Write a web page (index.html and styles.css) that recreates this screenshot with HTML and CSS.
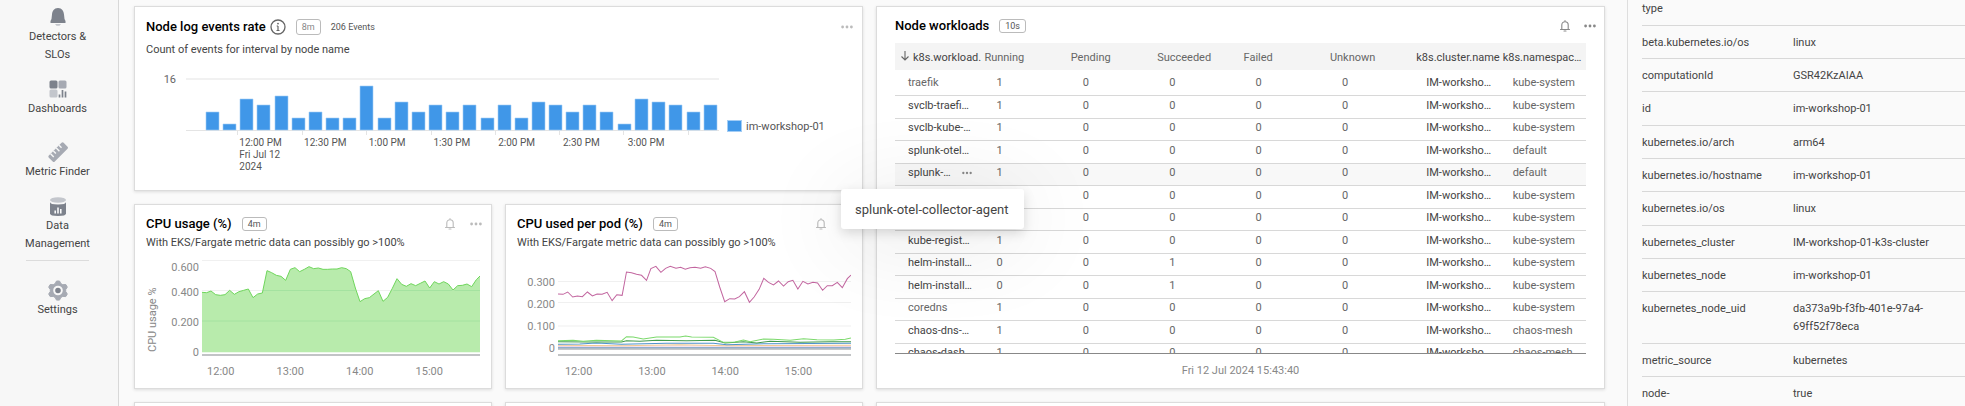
FILE: index.html
```html
<!DOCTYPE html>
<html lang="en">
<head>
<meta charset="utf-8">
<title>Kubernetes node dashboard</title>
<link rel="stylesheet" href="styles.css">
</head>
<body>
<svg class="defs" aria-hidden="true">
  <symbol id="bell" viewBox="0 0 12 12"><path d="M1.5 9.5h9M2.8 9.3V5a3.2 3.2 0 0 1 6.4 0v4.3M6 1.8V.6M5 11h2" fill="none" stroke="currentColor" stroke-width="1.1" stroke-linecap="round"/></symbol>
  <symbol id="dots" viewBox="0 0 12 4"><g fill="currentColor"><circle cx="1.6" cy="2" r="1.4"/><circle cx="6" cy="2" r="1.4"/><circle cx="10.4" cy="2" r="1.4"/></g></symbol>
</svg>

<nav class="nav">
  <a href="#detectors"><svg viewBox="0 0 20 20"><path d="M10 0C6 0 4.300 3 4 6.500L3.500 11 2.500 13v2h15v-2l-1-2-.5-4.500C15.700 3 14 0 10 0z" fill="#7d828c"/><path d="M7 16h6l-1.500 1.700h-3z" fill="#c3c6cc"/></svg>Detectors &amp; SLOs</a>
  <a href="#dashboards"><svg viewBox="0 0 20 20"><rect x="1.500" y="0.500" width="8" height="8" rx="1.500" fill="#7d828c"/><rect x="10.500" y="0.500" width="8" height="8" rx="1.500" fill="#a6aab3"/><rect x="1.500" y="9.500" width="8" height="8" rx="1.500" fill="#c3c6cc"/><path d="M11.500 17.500v-3M14.500 17.500v-7.500M17.500 17.500v-6" stroke="#7d828c" stroke-width="1.700"/></svg>Dashboards</a>
  <a href="#metrics" class="spaced"><svg viewBox="0 0 20 20"><g transform="rotate(-45 10 9)"><rect x="-.5" y="5" width="21" height="8.500" rx="1.500" fill="#a6aab3"/><path d="M3.500 5v4.500M7.500 5v3.500M11.500 5v4.500M15.500 5v3.500" stroke="#f7f7f7" stroke-width="1.400"/></g></svg>Metric Finder</a>
  <a href="#data"><svg viewBox="0 0 20 20"><path d="M2 3.500v13Q2 19 10 19t8-2.500v-13z" fill="#7d828c"/><path d="M2 3v2q0 2.500 8 2.500T18 5V3z" fill="#f7f7f7"/><ellipse cx="10" cy="3" rx="8" ry="2.800" fill="#c3c6cc"/><path d="M7.200 16.500v-3M10 16.500v-6M12.800 16.500v-4.500" stroke="#fff" stroke-width="1.500"/></svg>Data Management</a>
  <hr>
  <a href="#settings"><svg viewBox="0 0 20 20"><path d="M8.500 0h3l1.300 2.600 2 1.100 3-.2 1.500 2.600-1.600 2.500v1.900l1.600 2.500-1.500 2.600-3-.2-2 1.100-1.300 2.600h-3l-1.300-2.600-2-1.100-3 .2L.7 13l1.600-2.500V8.600L.7 6.100l1.500-2.600 3 .2 2-1.100z" fill="#a6aab3" stroke="#a6aab3" stroke-linejoin="round"/><circle cx="10" cy="9.500" r="3.800" fill="#7d828c" stroke="#f7f7f7" stroke-width="2"/></svg>Settings</a>
</nav>

<main class="board">
  <section class="card wide events">
    <header><h2>Node log events rate</h2>
      <svg class="info" viewBox="0 0 16 16"><circle cx="8" cy="8" r="7" fill="none" stroke="#666" stroke-width="1.300"/><path d="M8 7v4.500M6.500 11.500h3M6.700 7H8" stroke="#666" stroke-width="1.200" fill="none"/><circle cx="8" cy="4.600" r=".9" fill="#666"/></svg>
      <span class="badge">8m</span><span class="count">206 Events</span>
      <span class="tools"><button aria-label="More"><svg class="dots"><use href="#dots"/></svg></button></span></header>
    <p class="sub">Count of events for interval by node name</p>
    <div class="bars">
      <span class="max">16</span>
      <div class="plot">
        <svg viewBox="0 0 533 57" preserveAspectRatio="none">
          <path d="M0 1H533" stroke="#f1f1f1" stroke-width="2"/>
          <path d="M0 52.500H533M51.500 52v5M116.500 52v5M180.500 52v5M245.500 52v5M309.500 52v5M373.500 52v5M437.500 52v5M502.500 52v5" stroke="#e4e4e4"/>
          <path fill="#4097e8" stroke="#a3cdf5" stroke-width=".6" d="M20 52v-18h13v18zM37 52v-6h13v6zM54 52v-31h13v31zM71 52v-25h13v25zM89 52v-34h13v34zM106 52v-12h13v12zM123 52v-18h13v18zM140 52v-12h13v12zM157 52v-12h13v12zM174 52v-44h13v44zM192 52v-12h13v12zM209 52v-28h13v28zM226 52v-18h13v18zM243 52v-25h13v25zM260 52v-18h13v18zM277 52v-25h13v25zM295 52v-12h13v12zM312 52v-25h13v25zM329 52v-12h13v12zM346 52v-28h13v28zM363 52v-25h13v25zM380 52v-18h13v18zM397 52v-25h13v25zM414 52v-18h13v18zM432 52v-6h13v6zM449 52v-31h13v31zM466 52v-28h13v28zM483 52v-25h13v25zM501 52v-18h13v18zM518 52v-25h13v25z"/>
        </svg>
        <div class="times"><span>12:00 PM<br>Fri Jul 12<br>2024</span><span>12:30 PM</span><span>1:00 PM</span><span>1:30 PM</span><span>2:00 PM</span><span>2:30 PM</span><span>3:00 PM</span></div>
      </div>
      <div class="legend"><i></i>im-workshop-01</div>
    </div>
  </section>

  <section class="card wide tall workloads">
    <header><h2>Node workloads</h2><span class="badge">10s</span>
      <span class="tools"><button aria-label="Alerts"><svg class="bell"><use href="#bell"/></svg></button><button aria-label="More"><svg class="dots"><use href="#dots"/></svg></button></span></header>
    <div class="scroll">
      <table>
        <thead><tr><th class="dark"><svg class="sort" viewBox="0 0 8 10"><path d="M4 0v9M.5 5.500 4 9l3.500-3.500" fill="none" stroke="#666" stroke-width="1.100"/></svg>k8s.workload..</th><th>Running</th><th>Pending</th><th>Succeeded</th><th>Failed</th><th>Unknown</th><th class="dark">k8s.cluster.name</th><th class="dark">k8s.namespac…</th></tr></thead>
        <tbody>
          <tr><td>traefik</td><td>1</td><td>0</td><td>0</td><td>0</td><td>0</td><td class="dark">IM-worksho…</td><td>kube-system</td></tr>
          <tr><td class="dark">svclb-traefi…</td><td>1</td><td>0</td><td>0</td><td>0</td><td>0</td><td class="dark">IM-worksho…</td><td>kube-system</td></tr>
          <tr><td class="dark">svclb-kube-…</td><td>1</td><td>0</td><td>0</td><td>0</td><td>0</td><td class="dark">IM-worksho…</td><td>kube-system</td></tr>
          <tr><td class="dark">splunk-otel…</td><td>1</td><td>0</td><td>0</td><td>0</td><td>0</td><td class="dark">IM-worksho…</td><td>default</td></tr>
          <tr class="hover"><td class="dark">splunk-…<button aria-label="Row actions"><svg class="dots"><use href="#dots"/></svg></button></td><td>1</td><td>0</td><td>0</td><td>0</td><td>0</td><td class="dark">IM-worksho…</td><td>default</td></tr>
          <tr><td></td><td></td><td>0</td><td>0</td><td>0</td><td>0</td><td class="dark">IM-worksho…</td><td>kube-system</td></tr>
          <tr><td></td><td></td><td>0</td><td>0</td><td>0</td><td>0</td><td class="dark">IM-worksho…</td><td>kube-system</td></tr>
          <tr><td class="dark">kube-regist…</td><td>1</td><td>0</td><td>0</td><td>0</td><td>0</td><td class="dark">IM-worksho…</td><td>kube-system</td></tr>
          <tr><td class="dark">helm-install…</td><td>0</td><td>0</td><td>1</td><td>0</td><td>0</td><td class="dark">IM-worksho…</td><td>kube-system</td></tr>
          <tr><td class="dark">helm-install…</td><td>0</td><td>0</td><td>1</td><td>0</td><td>0</td><td class="dark">IM-worksho…</td><td>kube-system</td></tr>
          <tr><td>coredns</td><td>1</td><td>0</td><td>0</td><td>0</td><td>0</td><td class="dark">IM-worksho…</td><td>kube-system</td></tr>
          <tr><td class="dark">chaos-dns-…</td><td>1</td><td>0</td><td>0</td><td>0</td><td>0</td><td class="dark">IM-worksho…</td><td>chaos-mesh</td></tr>
          <tr><td class="dark">chaos-dash…</td><td>1</td><td>0</td><td>0</td><td>0</td><td>0</td><td class="dark">IM-worksho…</td><td>chaos-mesh</td></tr>
        </tbody>
      </table>
    </div>
    <footer>Fri 12 Jul 2024 15:43:40</footer>
    <div class="tooltip" role="tooltip">splunk-otel-collector-agent</div>
  </section>

  <section class="card">
    <header><h2>CPU usage (%)</h2><span class="badge">4m</span>
      <span class="tools"><button aria-label="Alerts"><svg class="bell"><use href="#bell"/></svg></button><button aria-label="More"><svg class="dots"><use href="#dots"/></svg></button></span></header>
    <p class="sub">With EKS/Fargate metric data can possibly go &gt;100%</p>
    <div class="line usage">
      <span class="axis">CPU usage %</span>
      <ul><li>0.600</li><li>0.400</li><li>0.200</li><li>0</li></ul>
      <div class="plot">
        <svg viewBox="606 171 834 288" preserveAspectRatio="none">
          <path d="M606 172.500H1440M606 262.500H1440M606 354H1440" stroke="#f0f0f0" stroke-width="3"/>
          <path d="M606 448V268L620 269 633 264 647 275 661 277 675 275 689 262 703 274 717 266 731 262 745 258 759 284 773 273 787 270 801 203 815 209 829 217 843 220 857 232 871 199 885 194 899 206 913 199 927 191 941 197 955 195 969 199 983 199 997 198 1011 198 1025 194 1039 197 1052 206 1066 255 1080 296 1094 287 1108 284 1122 273 1135 263 1149 295 1163 283 1177 256 1191 227 1205 244 1219 250 1233 242 1247 248 1261 241 1275 234 1289 255 1303 236 1317 243 1331 236 1345 243 1359 261 1373 248 1387 247 1401 243 1415 251 1429 230 1440 219V448z" fill="#b8ebac"/>
          <path d="M789 262.500H1066M1180 262.500H1357M1363 262.500H1440M606 354H1440" stroke="#a4e2a0" stroke-width="3"/>
          <path d="M606 268L620 269 633 264 647 275 661 277 675 275 689 262 703 274 717 266 731 262 745 258 759 284 773 273 787 270 801 203 815 209 829 217 843 220 857 232 871 199 885 194 899 206 913 199 927 191 941 197 955 195 969 199 983 199 997 198 1011 198 1025 194 1039 197 1052 206 1066 255 1080 296 1094 287 1108 284 1122 273 1135 263 1149 295 1163 283 1177 256 1191 227 1205 244 1219 250 1233 242 1247 248 1261 241 1275 234 1289 255 1303 236 1317 243 1331 236 1345 243 1359 261 1373 248 1387 247 1401 243 1415 251 1429 230 1440 219" fill="none" stroke="#6fd65c" stroke-width="3"/>
          <path d="M606 456H1440" stroke="#c2c4c6" stroke-width="6"/>
        </svg>
        <div class="hours"><span>12:00</span><span>13:00</span><span>14:00</span><span>15:00</span></div>
      </div>
    </div>
  </section>

  <section class="card">
    <header><h2>CPU used per pod (%)</h2><span class="badge">4m</span>
      <span class="tools"><button aria-label="Alerts"><svg class="bell"><use href="#bell"/></svg></button><button aria-label="More"><svg class="dots"><use href="#dots"/></svg></button></span></header>
    <p class="sub">With EKS/Fargate metric data can possibly go &gt;100%</p>
    <div class="line pods">
      <ul><li>0.300</li><li>0.200</li><li>0.100</li><li>0</li></ul>
      <div class="plot">
        <svg viewBox="235 171 877 288" preserveAspectRatio="none" fill="none" stroke-width="3">
          <path d="M235 235.500H1112M235 298.500H1112M235 369H1112" stroke="#f0f0f0"/>
          <path d="M235 273L250 274 264 267 279 282 293 279 308 281 323 267 338 279 352 273 367 274 382 268 397 293 411 275 427 277 440 207 455 209 470 214 485 217 500 232 513 197 528 190 543 208 557 196 571 190 588 196 602 193 616 199 630 194 645 193 662 196 676 191 692 196 705 206 719 252 734 296 749 287 764 288 778 281 793 266 808 298 822 282 837 259 851 226 865 238 880 246 895 234 910 249 924 236 938 232 953 258 968 235 983 243 998 238 1012 240 1027 262 1041 248 1056 248 1071 238 1086 254 1101 227 1112 216" stroke="#c2659f"/>
          <path d="M235 438H1112" stroke="#8f9296"/>
          <path d="M235 434H1112" stroke="#6d93bd"/>
          <path d="M235 430L600 429 1112 430" stroke="#dcb4d4" stroke-width="2"/>
          <path d="M235 427L430 428 600 425 740 428 1112 427" stroke="#f3c98f"/>
          <path d="M235 424L300 423 350 420 425 424 560 421 700 421 740 425 860 422 1112 421" stroke="#4f93cc"/>
          <path d="M235 416L330 417 425 417 440 413 480 415 530 412 620 413 705 412 735 420 790 416 830 420 870 415 960 418 1050 416 1112 416" stroke="#419a4b"/>
          <path d="M235 413L280 412 310 415 350 412 425 414 440 401 460 402 490 408 530 402 600 402 617 399 635 402 700 403 730 418 765 417 790 411 810 416 850 408 880 409 930 412 970 407 1010 410 1060 411 1095 409 1112 405" stroke="#7bd96b"/>
          <path d="M235 456H1112" stroke="#c2c4c6" stroke-width="6"/>
        </svg>
        <div class="hours"><span>12:00</span><span>13:00</span><span>14:00</span><span>15:00</span></div>
      </div>
    </div>
  </section>

  <section class="card"></section>
  <section class="card"></section>
  <section class="card wide"></section>
</main>

<aside class="props">
  <dl>
    <div><dt>type</dt><dd></dd></div>
    <div><dt>beta.kubernetes.io/os</dt><dd>linux</dd></div>
    <div><dt>computationId</dt><dd>GSR42KzAIAA</dd></div>
    <div><dt>id</dt><dd>im-workshop-01</dd></div>
    <div><dt>kubernetes.io/arch</dt><dd>arm64</dd></div>
    <div><dt>kubernetes.io/hostname</dt><dd>im-workshop-01</dd></div>
    <div><dt>kubernetes.io/os</dt><dd>linux</dd></div>
    <div><dt>kubernetes_cluster</dt><dd>IM-workshop-01-k3s-cluster</dd></div>
    <div><dt>kubernetes_node</dt><dd>im-workshop-01</dd></div>
    <div><dt>kubernetes_node_uid</dt><dd>da373a9b-f3fb-401e-97a4-69ff52f78eca</dd></div>
    <div><dt>metric_source</dt><dd>kubernetes</dd></div>
    <div><dt>node-</dt><dd>true</dd></div>
  </dl>
</aside>
</body>
</html>
```
FILE: styles.css
```css
* { box-sizing: border-box; }
body {
  margin: 0;
  height: 100vh;
  display: flex;
  overflow: hidden;
  background: #fafafa;
  color: #444;
  font: 11px/18px Roboto, "Liberation Sans", sans-serif;
}
h2, p, dl, dd, ul, hr { margin: 0; padding: 0; }
ul { list-style: none; }
button { padding: 0; border: 0; background: none; color: inherit; display: flex; }
.defs { position: absolute; width: 0; height: 0; }

/* Side navigation */
.nav {
  flex: none;
  width: 119px;
  padding: 8px 24px 0;
  display: flex;
  flex-direction: column;
  gap: 16px;
  background: #f7f7f7;
  border-right: 1px solid #d8d8d8;
}
.nav a {
  display: block;
  padding-right: 3px;
  color: #444;
  text-align: center;
  text-decoration: none;
}
.nav svg { display: block; width: 20px; height: 20px; margin: 0 auto; overflow: visible; }
.nav .spaced { margin-top: 9px; }
.nav hr { margin: -9px 5px 4px 2px; border: 0; border-top: 1px solid #dcdcdc; }

/* Dashboard */
.board {
  flex: 1;
  min-width: 0;
  padding: 6px 22px 0 15px;
  display: grid;
  grid-template-columns: repeat(4, minmax(0, 1fr));
  grid-auto-rows: 185px;
  gap: 13px;
}
.card {
  position: relative;
  display: flex;
  flex-direction: column;
  padding: 11px 11px 0;
  background: #fff;
  border: 1px solid #dcdcdc;
  box-shadow: 0 1px 3px rgba(0, 0, 0, .12);
}
.wide { grid-column: span 2; }
.tall { grid-row: span 2; }
header { display: flex; align-items: center; height: 16px; }
h2 { color: #000; font-size: 13px; font-weight: 500; line-height: 16px; }
.badge {
  margin-left: 10px;
  padding: 0 5px;
  border: 1px solid #bbb;
  border-radius: 3px;
  color: #555;
  font-size: 9px;
  line-height: 12px;
}
.tools { margin-left: auto; display: flex; align-items: center; gap: 14px; color: #bbb; margin-right: -2px; }
.dots { width: 12px; height: 4px; }
.bell { width: 12px; height: 12px; }
.sub { margin-top: 3px; line-height: 16px; }

/* Event bars */
.events header { height: 18px; }
.events .info { width: 16px; height: 16px; margin-left: 4px; }
.events .badge { color: #888; line-height: 14px; }
.events .sub { margin-top: 6px; }
.count { margin-left: 10px; color: #555; font-size: 9px; }
.bars { display: flex; margin-top: 20px; }
.bars .max { width: 30px; margin-right: 10px; text-align: right; line-height: 4px; color: #666; }
.bars .plot { flex: 1; }
.bars .plot svg { display: block; width: 100%; height: 57px; }
.times {
  display: grid;
  grid-template-columns: repeat(7, 1fr);
  margin: 2px -4px 0 10%;
  color: #555;
  font-size: 10px;
  line-height: 12px;
  white-space: nowrap;
}
.times { margin-right: 5%; }
.legend { display: flex; gap: 4px; width: 132px; padding: 40px 0 0 8px; color: #555; }
.legend i { width: 15px; height: 12px; margin-top: 2px; background: #4097e8; border: 1px solid #a3cdf5; }

/* Line charts */
.line { display: flex; margin-top: 9px; color: #888; }
.line ul { padding: 1px 3px 0 0; text-align: right; line-height: 14px; }
.line li { height: 30px; }
.line .plot { flex: 1; }
.line .plot svg { display: block; width: 100%; height: 96px; }
.axis {
  width: 14px;
  height: 92px;
  line-height: 14px;
  writing-mode: vertical-rl;
  transform: rotate(180deg);
}
.usage ul { width: 42px; }
.usage li:first-child { height: 25px; }
.pods ul { width: 41px; padding-top: 16px; }
.pods li { height: 22px; }
.hours {
  display: grid;
  grid-template-columns: repeat(4, 1fr);
  margin: 7px 16px 0 -16px;
  width: 100%;
  text-align: center;
}

/* Workload table */
.workloads { z-index: 1; padding: 11px 18px 0; }
.workloads header { height: 15px; margin-bottom: 10px; }
.workloads .tools { color: #888; margin-right: -10px; gap: 13px; }
.scroll { flex: 1; min-height: 0; overflow: hidden; border-bottom: 1px solid #888; }
table { width: 100%; table-layout: fixed; border-spacing: 0; color: #666; line-height: 16px; }
th, td { white-space: nowrap; text-align: left; overflow: hidden; }
th { height: 27px; padding: 2px 0 0 3px; font-weight: 400; background: #f4f4f4; }
th:first-child { padding-left: 6px; }
.dark { color: #444; }
.sort { width: 8px; height: 10px; margin-right: 4px; }
td { padding: 0 0 4px 13px; vertical-align: bottom; border-bottom: 1px solid #d8d8d8; }
td:nth-child(n+2):nth-child(-n+6) { padding-left: 15px; }
tbody tr { height: 22px; }
tbody tr:nth-child(even) { height: 23px; }
tbody tr:first-child { height: 26px; }
.hover { background: #f8f8f8; }
td button { display: inline-flex; vertical-align: middle; margin-left: 11px; color: #888; }
td .dots { width: 10px; }
footer { height: 34px; line-height: 33px; text-align: center; color: #888; }
.tooltip {
  position: absolute;
  left: -36px;
  top: 182px;
  padding: 12px 15px 10px 14px;
  background: #fff;
  border-radius: 3px;
  box-shadow: 0 4px 12px rgba(0, 0, 0, .14), 0 10px 90px rgba(0, 0, 0, .12);
  font-size: 13px;
}

/* Properties */
.props {
  flex: none;
  width: 338px;
  padding-left: 14px;
  border-left: 1px solid #dedede;
}
dl div {
  display: grid;
  grid-template-columns: 151px 140px;
  padding: 8px 0 6px;
  border-bottom: 1px solid #d8d8d8;
}
dl div:first-child { padding: 0 0 7px; }
dl div:nth-child(3n+4) { padding-bottom: 7px; }
```
